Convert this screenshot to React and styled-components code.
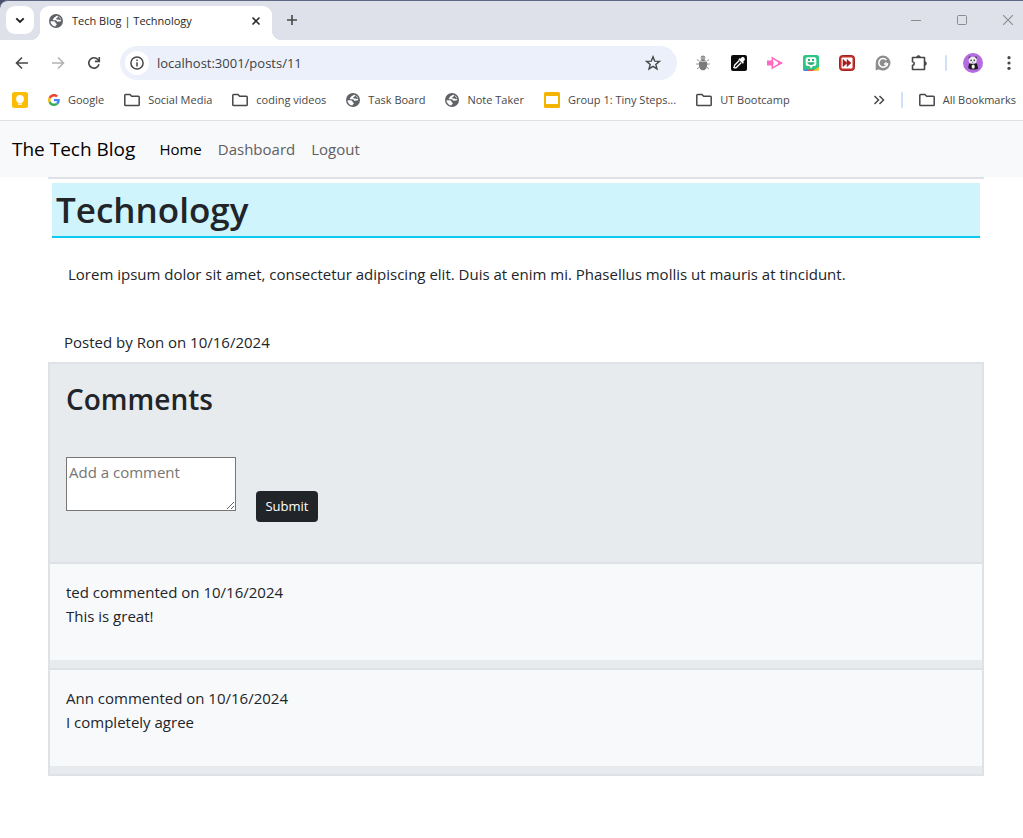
import React from "react";
import styled, { createGlobalStyle } from "styled-components";

const GlobalStyle = createGlobalStyle`
  *, *::before, *::after { box-sizing: border-box; }
  body {
    margin: 0;
    background: #fff;
    color: #212529;
    font-family: "Segoe UI", "Open Sans", "Noto Sans", sans-serif;
    font-size: 15px;
    line-height: 24px;
  }
  h1, h2, p { margin: 0; }
  button { font: inherit; color: inherit; border: 0; background: none; padding: 0; }
  a { color: inherit; text-decoration: none; }
  svg { display: block; flex: none; }
`;

/* ---------- browser chrome ---------- */

const TabStrip = styled.header`
  display: flex;
  height: 40px;
  padding: 5px 0 0 6px;
  border-top: 1px solid #5f6883;
  border-top-left-radius: 8px;
  background: #dee1e9;
  font-size: 11px;
  line-height: 16px;
`;

const StripCorner = styled.div`
  background: #4a5068;
`;

const TabSearch = styled.button`
  display: grid;
  place-items: center;
  width: 28px;
  height: 28px;
  margin-right: 6px;
  border-radius: 9px;
  background: #fff;
`;

const Tab = styled.div`
  position: relative;
  display: flex;
  align-items: center;
  gap: 9px;
  width: 232px;
  padding: 0 10px 4px 9px;
  border-radius: 9px 9px 0 0;
  background: #fff;
  color: #1f1f1f;

  &::before, &::after {
    content: "";
    position: absolute;
    bottom: 0;
    width: 9px;
    height: 9px;
  }
  &::before {
    right: 100%;
    background: radial-gradient(circle at 0 0, transparent 9px, #fff 9px);
  }
  &::after {
    left: 100%;
    background: radial-gradient(circle at 100% 0, transparent 9px, #fff 9px);
  }
`;

const TabTitle = styled.span`
  flex: 1;
  white-space: nowrap;
`;

const StripButton = styled.button`
  display: grid;
  place-items: center;
  width: ${(p) => p.$width}px;
  height: 28px;
`;

const WindowControls = styled.div`
  display: flex;
  margin-left: auto;
  margin-right: -8px;
`;

const Toolbar = styled.div`
  display: flex;
  align-items: center;
  height: 40px;
  padding: 6px 0 0 4px;
  background: #fff;
`;

const IconButton = styled.button`
  display: grid;
  place-items: center;
  flex: none;
  width: 36px;
  height: 34px;
`;

const MenuButton = styled(IconButton)`
  width: 32px;
  padding-left: 4px;
`;

const AddressBar = styled.div`
  display: flex;
  align-items: center;
  flex: 1;
  min-width: 0;
  height: 34px;
  margin: 0 8px;
  padding: 0 6px 0 5px;
  border-radius: 17px;
  background: #ecf0fa;
`;

const SiteInfo = styled.button`
  display: grid;
  place-items: center;
  width: 24px;
  height: 24px;
  margin-right: 8px;
  border-radius: 50%;
  background: #fff;
`;

const Url = styled.input`
  flex: 1;
  min-width: 0;
  padding: 0;
  border: 0;
  background: none;
  color: #3c3f44;
  font: 13px/20px "Segoe UI", "Open Sans", "Noto Sans", sans-serif;
`;

const Divider = styled.span`
  flex: none;
  width: 2px;
  height: 16px;
  margin: 0 ${(p) => p.$gap}px;
  border-radius: 1px;
  background: #cfe0fb;
`;

const BookmarksBar = styled.nav`
  display: flex;
  align-items: center;
  height: 41px;
  padding: 0 7px 0 12px;
  border-bottom: 1px solid #e1e2e0;
  background: #fff;
  color: #474747;
  font-size: 11px;
  line-height: 16px;
`;

const Bookmarks = styled.div`
  display: flex;
  flex: 1;
  gap: 20px;
`;

const Bookmark = styled.a`
  display: flex;
  align-items: center;
  gap: 8px;
  white-space: nowrap;
`;

/* ---------- page ---------- */

const NavBar = styled.nav`
  display: flex;
  align-items: center;
  height: 56px;
  padding: 0 12px;
  background: #f8f9fb;
`;

const Brand = styled.a`
  margin-right: 24px;
  color: #000;
  font-size: 19px;
  line-height: 30px;
`;

const NavLinks = styled.div`
  display: flex;
  gap: 16px;
`;

const NavLink = styled.a`
  color: ${(p) => (p.$active ? "#000" : "#5f6062")};
`;

const Main = styled.main`
  padding: 0 39px 62px 48px;
`;

const Post = styled.article`
  padding: 4px 4px 8px;
  border-top: 2px solid #dee2e6;
`;

const PostTitle = styled.h1`
  padding: 3px 4px 2px;
  border-bottom: 2px solid #0dcaf0;
  background: #cff4fc;
  font-size: 35px;
  font-weight: 600;
  line-height: 48px;
`;

const PostBody = styled.p`
  padding: 24px 16px 44px;
`;

const PostMeta = styled.p`
  padding: 0 12px;
`;

const CommentsBox = styled.section`
  border: 2px solid #dee2e6;
  background: #e7ebee;
`;

const CommentsHead = styled.div`
  padding: 16px 16px 40px;
`;

const CommentsTitle = styled.h2`
  margin-bottom: 38px;
  font-size: 28px;
  font-weight: 600;
  line-height: 39px;
`;

const CommentForm = styled.form`
  display: flex;
  align-items: flex-end;
  gap: 20px;
`;

const CommentInput = styled.textarea`
  align-self: flex-start;
  width: 170px;
  height: 54px;
  margin-bottom: 11px;
  padding: 2px;
  border: 1px solid #767676;
  border-radius: 0;
  background: #fff;
  font: 15px/24px "Segoe UI", "Open Sans", "Noto Sans", sans-serif;

  &::placeholder { color: #757575; }
`;

const SubmitButton = styled.button`
  width: 62px;
  height: 31px;
  border-radius: 4px;
  background: #212529;
  color: #fff;
  font-size: 13px;
  line-height: 21px;
`;

const Comment = styled.div`
  height: 98px;
  padding: 16px;
  margin-bottom: 8px;
  border-top: 2px solid #dee2e6;
  background: #f8f9fb;
`;

/* ---------- icons ---------- */

const Svg = ({ size = 16, box = 16, children, ...rest }) => (
  <svg width={size} height={size} viewBox={`0 0 ${box} ${box}`} fill="none" aria-hidden="true" {...rest}>
    {children}
  </svg>
);

const Globe = () => (
  <Svg size={14} box={14}>
    <circle cx="7" cy="7" r="7" fill="#5f6368" />
    <path d="M8.4 1.7C6.9 1.9 6.6 3 5.5 3.3 4.6 3.7 4.9 4.7 4 5.1c-.5.4-.2 1.2.5 1.2h2.2c1 0 1 1.3 1.9 1.5 1.2.3 2.2-.6 3.6-.5.2-2.5-1.3-4.9-3.8-5.6Z" fill="#fff" />
    <path d="M1.5 7.2h3c1.6 0 2 .8 2 1.7 0 .7 1.3.4 1.3 1.3 0 .8-1.2.8-1.4 2.2-2.7-.2-4.8-2.5-4.9-5.2Z" fill="#fff" />
    <path d="M9.3 1.9C8.2 2.6 9 3.6 8 4c-.9.3-1.3.9-.5 1.3.9.5 1.9-.2 2.6.5.5.5 1.3.4 2 .2" fill="#5f6368" />
  </Svg>
);

const Folder = () => (
  <Svg>
    <path d="M.8 3.3c0-.5.3-.8.8-.8h4.3l1.8 1.8h6.7c.5 0 .8.3.8.8v7.6c0 .5-.3.8-.8.8H1.6c-.5 0-.8-.3-.8-.8Z" stroke="#474747" strokeWidth="1.5" />
  </Svg>
);

const Keep = () => (
  <Svg>
    <rect width="16" height="16" rx="2.5" fill="#fbbc04" />
    <circle cx="8" cy="7" r="3.9" fill="#fff" />
    <path d="M6 9h4v1.7H6ZM6 11.5h4v1.3H6Z" fill="#fff" />
  </Svg>
);

const GoogleMark = () => (
  <Svg size={12} box={48}>
    <path fill="#EA4335" d="M24 9.5c3.54 0 6.71 1.22 9.21 3.6l6.85-6.85C35.9 2.38 30.47 0 24 0 14.62 0 6.51 5.38 2.56 13.22l7.98 6.19C12.43 13.72 17.74 9.5 24 9.5z" />
    <path fill="#4285F4" d="M46.98 24.55c0-1.57-.15-3.09-.38-4.55H24v9.02h12.94c-.58 2.96-2.26 5.48-4.78 7.18l7.73 6c4.51-4.18 7.09-10.36 7.09-17.65z" />
    <path fill="#FBBC05" d="M10.53 28.59c-.48-1.45-.76-2.99-.76-4.59s.27-3.14.76-4.59l-7.98-6.19C.92 16.46 0 20.12 0 24c0 3.88.92 7.54 2.56 10.78l7.97-6.19z" />
    <path fill="#34A853" d="M24 48c6.48 0 11.93-2.13 15.89-5.81l-7.73-6c-2.15 1.45-4.92 2.3-8.16 2.3-6.26 0-11.57-4.22-13.47-9.91l-7.98 6.19C6.51 42.62 14.62 48 24 48z" />
  </Svg>
);

const Slides = () => (
  <Svg>
    <rect width="16" height="16" rx="1.5" fill="#f4b400" />
    <rect x="2" y="4" width="12" height="8" fill="#fff" />
  </Svg>
);

const ArrowBack = () => (
  <Svg><path d="M14 8H3M8 2.5 2.5 8 8 13.5" stroke="#474747" strokeWidth="1.6" /></Svg>
);
const ArrowForward = () => (
  <Svg><path d="M2 8h11M8 2.5 13.5 8 8 13.5" stroke="#b3b3b3" strokeWidth="1.6" /></Svg>
);
const Reload = () => (
  <Svg>
    <path d="M13 9.3A5.2 5.2 0 1 1 12 4.6L13 5.8" stroke="#474747" strokeWidth="1.6" />
    <path d="M13.3 2v4.4H8.9" stroke="#474747" strokeWidth="1.6" />
  </Svg>
);
const Info = () => (
  <Svg size={14} box={14}>
    <circle cx="7" cy="7" r="6.1" stroke="#474747" strokeWidth="1.5" />
    <path d="M7 6.2v4.2M7 3.6v1.5" stroke="#474747" strokeWidth="1.5" />
  </Svg>
);
const Star = () => (
  <Svg>
    <path d="m8 1.8 1.7 4.3 4.7.3-3.6 3 1.2 4.5-4-2.5-4 2.5 1.2-4.5-3.6-3 4.7-.3Z" stroke="#474747" strokeWidth="1.4" />
  </Svg>
);
const Bug = () => (
  <Svg>
    <path d="M4 6 1.8 4.5M12 6l2.2-1.5M4 9H1M12 9h3M4.5 12l-2.5 2M11.5 12l2.5 2" stroke="#9a9a9a" strokeWidth="1" />
    <circle cx="8" cy="3" r="2.4" fill="#8c8c8c" />
    <path d="M4.3 6.2c2-1.5 5.4-1.5 7.4 0 1.2 4.5-.2 9.1-3.7 9.1S3.1 10.7 4.3 6.2Z" fill="#7b7b7b" />
    <path d="M4 6.5h8M6 3h4" stroke="#d2d2d2" strokeWidth=".8" />
  </Svg>
);
const Eyedropper = () => (
  <Svg>
    <rect width="16" height="16" rx="2" fill="#0c0c0c" />
    <path d="M8.3 5.5 4 9.8c-1 1-.3 1.7-1.1 2.6.9.7 1.8.8 2.7-.1l4.5-4.5" stroke="#fff" strokeWidth="1.3" />
    <path d="m7.3 4.3 4.5 4.5 1.1-1.1-.7-.9 1.2-1.3c1.6-1.8-1.1-4.5-2.9-2.9L9.3 3.8l-.9-.6Z" fill="#fff" />
  </Svg>
);
const PinkPlay = () => (
  <Svg>
    <path d="M5.3 2.8v10.4L14 8Z" fill="#fff" stroke="#ff69c2" strokeWidth="1.5" />
    <rect x="0" y="5.5" width="5.5" height="5" fill="#ff69c2" />
    <path d="M11 5.5 16 8l-5 2.5Z" fill="#ff69c2" />
    <path d="M5.5 6.500h1v3h-1Z" fill="#ff69c2" />
  </Svg>
);
const Bitmoji = () => (
  <Svg>
    <rect width="16" height="16" rx="2.5" fill="#2dc684" />
    <path d="M0 14.2h5v1.8H2Q.3 16 0 14.2Z" fill="#4287dc" />
    <path d="M4.5 14.3 8 15l3-1v2H4.5Z" fill="#ee4b54" />
    <path d="M9.5 16 16 12v2q0 2-2 2Z" fill="#ffc229" />
    <path d="M4.5 2.3h7q1.8 0 1.8 1.8v5.2q0 1.8-1.8 1.8H10l-2 2.3-1.5-2.3h-2q-1.8 0-1.8-1.8V4.1q0-1.8 1.8-1.8Z" fill="#fff" />
    <path d="M5 4h2v2H5ZM9 4h2v2H9ZM4.3 7.3h7.4C11.4 9 10 10 8 10s-3.4-1-3.7-2.7Z" fill="#2dae78" />
  </Svg>
);
const FastForward = () => (
  <Svg>
    <rect x=".5" y=".5" width="15" height="15" rx="3" fill="#c6302b" stroke="#9f2420" />
    <rect x="2.5" y="2.5" width="11" height="11" rx="1" fill="#fff" />
    <path d="M4 4.5 8 8l-4 3.5ZM8 4.5 12 8l-4 3.5Z" fill="#a61c1c" stroke="#a61c1c" strokeWidth=".6" />
  </Svg>
);
const Grammar = () => (
  <Svg>
    <path d="M8 .5a7.5 7.5 0 1 1-4 13.9L.7 15.3V8A7.4 7.4 0 0 1 8 .5Z" fill="#8d8d8d" />
    <path d="M11.3 5A4.3 4.3 0 1 0 12.2 9H9" stroke="#fff" strokeWidth="1.5" />
    <path d="m10 7.5 3 1.2-1.3 2.8" stroke="#fff" strokeWidth="1" />
  </Svg>
);
const Puzzle = () => (
  <Svg size={18} box={18}>
    <path d="M2.5 3.5h12v12h-12v-4.2c2.3-.1 2.3-3.5 0-3.6Z" stroke="#474747" strokeWidth="1.6" strokeLinejoin="round" />
    <path d="M6.5 3.5a2 2 0 0 1 4 0ZM14.5 7.5a2 2 0 0 1 0 4Z" fill="#474747" stroke="#474747" strokeWidth=".6" />
  </Svg>
);
const Avatar = () => (
  <Svg size={20} box={20}>
    <circle cx="10" cy="10" r="10" fill="#b56be0" />
    <circle cx="6.8" cy="4.8" r="1.3" fill="#333" />
    <circle cx="12.8" cy="4.6" r="1.2" fill="#333" />
    <path d="M6 10.5h8l1.2 5.3-3 .8H8L5.2 15Z" fill="#1c1c1c" />
    <ellipse cx="9.7" cy="7.3" rx="4" ry="3.5" fill="#eee" />
    <ellipse cx="10.2" cy="13.7" rx="1.6" ry="2.1" fill="#eee" />
    <ellipse cx="8.1" cy="7.3" rx=".8" ry=".9" fill="#333" />
    <ellipse cx="11.3" cy="7.3" rx=".8" ry=".9" fill="#333" />
    <circle cx="9.7" cy="9.2" r=".5" fill="#333" />
  </Svg>
);
const Dots = () => (
  <Svg>
    <circle cx="8" cy="2.7" r="1.6" fill="#474747" />
    <circle cx="8" cy="8" r="1.6" fill="#474747" />
    <circle cx="8" cy="13.3" r="1.6" fill="#474747" />
  </Svg>
);
const ChevronDown = () => (
  <Svg><path d="M4.3 6.3 8 10l3.7-3.7" stroke="#1f1f1f" strokeWidth="1.9" /></Svg>
);
const Cross = () => (
  <Svg size={12} box={12}><path d="m2.5 2.5 7 7M9.5 2.5l-7 7" stroke="#303030" strokeWidth="1.6" /></Svg>
);
const Plus = () => (
  <Svg><path d="M8 3v10M3 8h10" stroke="#474747" strokeWidth="1.6" /></Svg>
);
const Minimize = () => (
  <Svg size={10} box={10}><path d="M0 5.5h10" stroke="#8a8c90" /></Svg>
);
const Maximize = () => (
  <Svg size={10} box={10}><rect x=".5" y=".5" width="9" height="9" rx="1" stroke="#8a8c90" /></Svg>
);
const CloseWindow = () => (
  <Svg size={10} box={10}><path d="m0 0 10 10M10 0 0 10" stroke="#8a8c90" strokeWidth="1.1" /></Svg>
);
const More = () => (
  <Svg size={12} box={12}><path d="m1.5 2 4 4-4 4M6.500 2l4 4-4 4" stroke="#474747" strokeWidth="1.5" /></Svg>
);

const bookmarks = [
  { Icon: Keep, label: "" },
  { Icon: GoogleMark, label: "Google" },
  { Icon: Folder, label: "Social Media" },
  { Icon: Folder, label: "coding videos" },
  { Icon: Globe, label: "Task Board" },
  { Icon: Globe, label: "Note Taker" },
  { Icon: Slides, label: "Group 1: Tiny Steps..." },
  { Icon: Folder, label: "UT Bootcamp" },
];

const extensions = [
  ["Bug reporter", Bug],
  ["Color picker", Eyedropper],
  ["Screen recorder", PinkPlay],
  ["Bitmoji", Bitmoji],
  ["Video speed", FastForward],
  ["Grammar", Grammar],
  ["Extensions", Puzzle],
];

const comments = [
  { author: "ted", date: "10/16/2024", text: "This is great!" },
  { author: "Ann", date: "10/16/2024", text: "I completely agree" },
];

export default function App() {
  return (
    <>
      <GlobalStyle />
      <StripCorner>
        <TabStrip>
          <TabSearch aria-label="Search tabs"><ChevronDown /></TabSearch>
          <Tab>
            <Globe />
            <TabTitle>Tech Blog | Technology</TabTitle>
            <button aria-label="Close tab"><Cross /></button>
          </Tab>
          <StripButton $width={40} aria-label="New tab"><Plus /></StripButton>
          <WindowControls>
            <StripButton $width={46} aria-label="Minimize"><Minimize /></StripButton>
            <StripButton $width={46} aria-label="Maximize"><Maximize /></StripButton>
            <StripButton $width={46} aria-label="Close"><CloseWindow /></StripButton>
          </WindowControls>
        </TabStrip>
      </StripCorner>

      <Toolbar>
        <IconButton aria-label="Back"><ArrowBack /></IconButton>
        <IconButton aria-label="Forward"><ArrowForward /></IconButton>
        <IconButton aria-label="Reload"><Reload /></IconButton>
        <AddressBar>
          <SiteInfo aria-label="Site information"><Info /></SiteInfo>
          <Url aria-label="Address" defaultValue="localhost:3001/posts/11" />
          <IconButton aria-label="Bookmark this tab"><Star /></IconButton>
        </AddressBar>
        {extensions.map(([name, Icon]) => (
          <IconButton key={name} aria-label={name}><Icon /></IconButton>
        ))}
        <Divider $gap={8} />
        <IconButton aria-label="Profile"><Avatar /></IconButton>
        <MenuButton aria-label="Menu"><Dots /></MenuButton>
      </Toolbar>

      <BookmarksBar aria-label="Bookmarks">
        <Bookmarks>
          {bookmarks.map(({ Icon, label }) => (
            <Bookmark key={label} href="#" aria-label={label || "Keep"}>
              <Icon />
              {label}
            </Bookmark>
          ))}
        </Bookmarks>
        <button aria-label="More bookmarks"><More /></button>
        <Divider $gap={16} />
        <Bookmark href="#"><Folder />All Bookmarks</Bookmark>
      </BookmarksBar>

      <NavBar>
        <Brand href="#">The Tech Blog</Brand>
        <NavLinks>
          <NavLink href="#" $active>Home</NavLink>
          <NavLink href="#">Dashboard</NavLink>
          <NavLink href="#">Logout</NavLink>
        </NavLinks>
      </NavBar>

      <Main>
        <Post>
          <PostTitle>Technology</PostTitle>
          <PostBody>
            Lorem ipsum dolor sit amet, consectetur adipiscing elit. Duis at enim mi. Phasellus mollis ut mauris at tincidunt.
          </PostBody>
          <PostMeta>Posted by Ron on 10/16/2024</PostMeta>
        </Post>

        <CommentsBox>
          <CommentsHead>
            <CommentsTitle>Comments</CommentsTitle>
            <CommentForm onSubmit={(e) => e.preventDefault()}>
              <CommentInput aria-label="Add a comment" placeholder="Add a comment" />
              <SubmitButton type="submit">Submit</SubmitButton>
            </CommentForm>
          </CommentsHead>
          {comments.map((c) => (
            <Comment key={c.author}>
              <p>{c.author} commented on {c.date}</p>
              <p>{c.text}</p>
            </Comment>
          ))}
        </CommentsBox>
      </Main>
    </>
  );
}
